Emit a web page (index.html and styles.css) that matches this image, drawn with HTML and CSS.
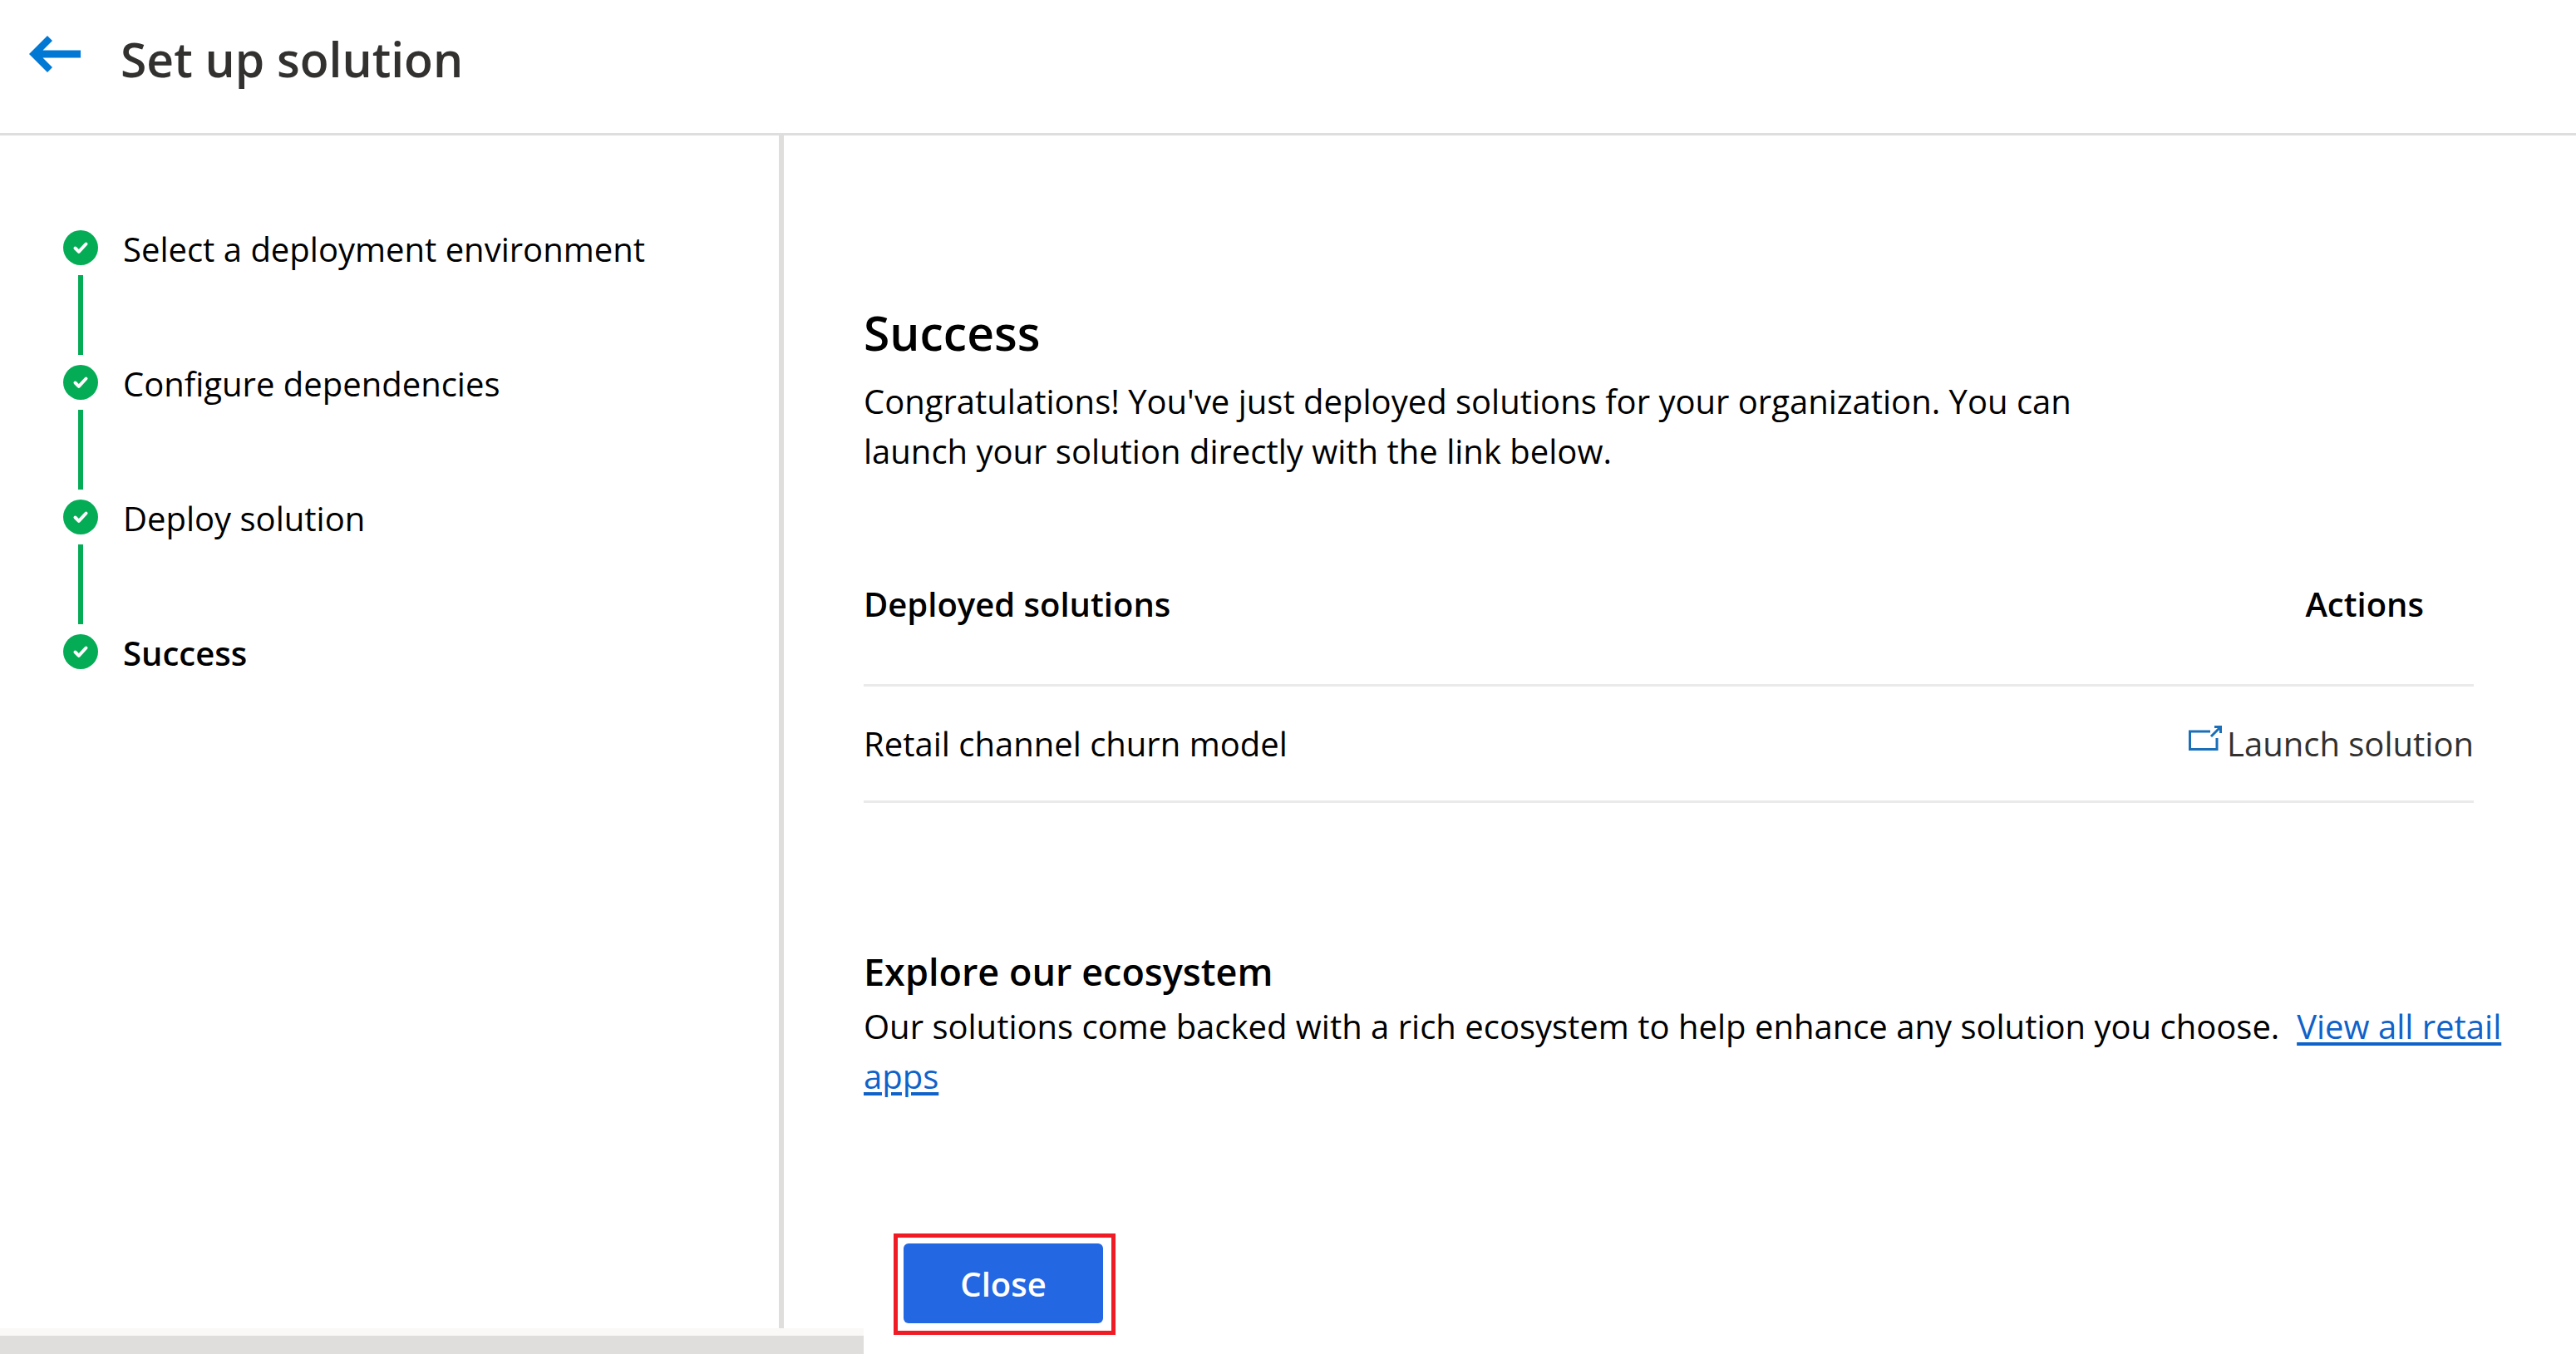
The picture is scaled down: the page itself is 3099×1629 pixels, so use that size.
FILE: index.html
```html
<!DOCTYPE html>
<html lang="en">
<head>
<meta charset="utf-8">
<meta name="viewport" content="width=device-width, initial-scale=1">
<title>Set up solution</title>
<link rel="stylesheet" href="styles.css">
</head>
<body>
<svg class="symbols" aria-hidden="true">
  <symbol id="check" viewBox="0 0 42 42">
    <circle cx="21" cy="21" r="21"/>
    <path d="M14.5 21.5 18.8 25.8 27.5 16.5" fill="none" stroke="#fff" stroke-width="4" stroke-linecap="round" stroke-linejoin="round"/>
  </symbol>
</svg>
<header class="header">
  <button class="back" type="button" aria-label="Back">
    <svg class="back-icon" viewBox="0 0 62 44" aria-hidden="true"><path d="M22 0 0 22 22 44 28 38 16.500 26.500H62V17.500H16.500L28 6Z"/></svg>
  </button>
  <h1 class="title">Set up solution</h1>
</header>
<div class="wizard">
  <nav class="sidebar" aria-label="Setup steps">
    <ol class="steps">
      <li class="step"><svg class="step-icon" aria-hidden="true"><use href="#check"/></svg><span>Select a deployment environment</span></li>
      <li class="step"><svg class="step-icon" aria-hidden="true"><use href="#check"/></svg><span>Configure dependencies</span></li>
      <li class="step"><svg class="step-icon" aria-hidden="true"><use href="#check"/></svg><span>Deploy solution</span></li>
      <li class="step step-current" aria-current="step"><svg class="step-icon" aria-hidden="true"><use href="#check"/></svg><span>Success</span></li>
    </ol>
  </nav>
  <main class="content">
    <h2 class="heading">Success</h2>
    <p class="intro">Congratulations! You've just deployed solutions for your organization. You can launch your solution directly with the link below.</p>
    <table class="solutions">
      <thead>
        <tr><th scope="col">Deployed solutions</th><th class="actions" scope="col">Actions</th></tr>
      </thead>
      <tbody>
        <tr>
          <td>Retail channel churn model</td>
          <td class="launch-cell"><a class="launch" href="#launch"><svg class="launch-icon" viewBox="0 0 40 30" aria-hidden="true"><path d="M26 7H1.500V28.500H34V15M27 13 38 2M31 1.500H38.500V9" fill="none" stroke="#1a6fb8" stroke-width="3"/></svg>Launch solution</a></td>
        </tr>
      </tbody>
    </table>
    <h3 class="subheading">Explore our ecosystem</h3>
    <p class="explore">Our solutions come backed with a rich ecosystem to help enhance any solution you choose.&nbsp; <a class="link" href="#apps">View all retail apps</a></p>
    <div class="highlight"><button class="close" type="button">Close</button></div>
  </main>
  <div class="scrollbar" aria-hidden="true"></div>
</div>
</body>
</html>
```

FILE: styles.css
```css
* {
  box-sizing: border-box;
}

body {
  margin: 0;
  min-height: 100vh;
  display: flex;
  flex-direction: column;
  background: #fff;
  color: #000;
  font-family: "Open Sans", "Noto Sans", sans-serif;
  font-size: 40px;
  line-height: 60px;
}

h1, h2, h3, p, ol {
  margin: 0;
  padding: 0;
}

.symbols {
  position: absolute;
  width: 0;
  height: 0;
}

.header {
  display: flex;
  align-items: flex-start;
  gap: 48px;
  padding: 31px 35px 49px;
  border-bottom: 3px solid #dedede;
}

.back {
  display: flex;
  margin: 0;
  padding: 12px 0;
  border: 0;
  background: none;
  cursor: pointer;
}

.back-icon {
  width: 62px;
  height: 44px;
  fill: #0078d4;
}

.title {
  color: #323130;
  font-size: 57px;
  font-weight: 600;
  line-height: 80px;
}

.wizard {
  position: relative;
  flex: 1;
  display: grid;
  grid-template-columns: 943px 1fr;
}

.sidebar {
  padding: 107px 40px 0 76px;
  border-right: 6px solid #dfdedd;
}

.steps {
  list-style: none;
}

.step {
  display: grid;
  grid-template-columns: 42px 1fr;
  column-gap: 30px;
  align-items: start;
}

.step-icon {
  width: 42px;
  height: 42px;
  margin-top: 7px;
  fill: #05ac56;
}

.step:not(:last-child)::after {
  content: "";
  justify-self: center;
  width: 6px;
  height: 96px;
  margin: 1px 0 5px;
  background: #05ac56;
}

.step-current {
  font-weight: 600;
}

.content {
  padding: 197px 80px 22px 96px;
}

.heading {
  font-size: 57px;
  font-weight: 600;
  line-height: 80px;
}

.intro {
  max-width: 1500px;
  margin-top: 13px;
}

.solutions {
  width: calc(100% - 43px);
  margin-top: 124px;
  border-collapse: separate;
  border-spacing: 0;
}

.solutions th,
.solutions td {
  border-bottom: 3px solid #eaeaea;
  text-align: left;
}

.solutions th {
  padding: 0 0 66px;
  font-weight: 600;
}

.solutions td {
  padding: 39px 0 38px;
}

.solutions .actions {
  padding-right: 60px;
  text-align: right;
}

.solutions .launch-cell {
  text-align: right;
}

.launch {
  display: inline-flex;
  align-items: flex-start;
  gap: 6px;
  color: #323130;
  text-decoration: none;
  vertical-align: top;
}

.launch-icon {
  width: 40px;
  height: 30px;
  margin-top: 8px;
}

.subheading {
  margin-top: 173px;
  font-size: 45px;
  font-weight: 600;
}

.explore {
  margin-top: 6px;
}

.link {
  color: #0f62c9;
  text-decoration-thickness: 4px;
  text-underline-offset: 4px;
}

.highlight {
  width: fit-content;
  margin: 159px 0 0 36px;
  padding: 7px 10px 9px 7px;
  border: 5px solid #ef1c25;
}

.close {
  display: block;
  width: 240px;
  height: 96px;
  padding: 2px 0 0;
  border: 0;
  border-radius: 6px;
  background: #2367e3;
  color: #fff;
  font: inherit;
  font-weight: 600;
  cursor: pointer;
}

.scrollbar {
  position: absolute;
  bottom: 0;
  left: 0;
  width: 1039px;
  height: 31px;
  border-top: 9px solid #faf9f8;
  background: #dfdedd;
}
```
